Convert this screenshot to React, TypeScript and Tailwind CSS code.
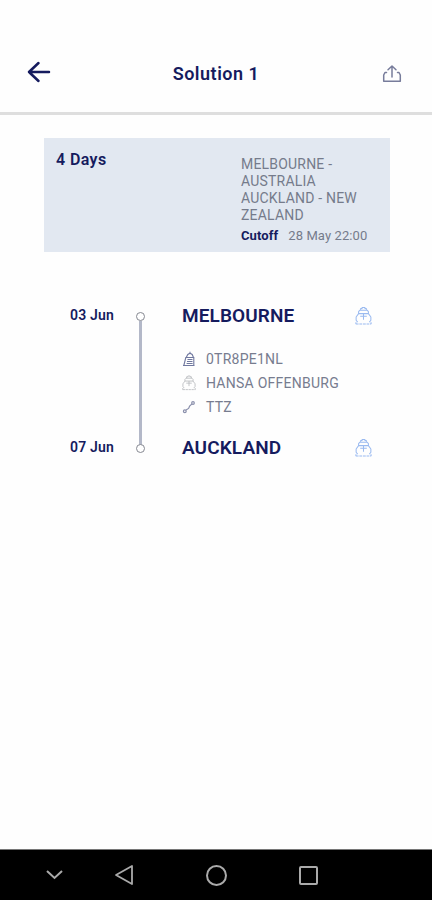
import React from 'react';

const ShipIcon: React.FC<{ className?: string }> = ({ className }) => (
  <svg viewBox="0 0 18 20" className={className} fill="none" stroke="currentColor" strokeWidth="1.1" strokeLinejoin="round">
    <path d="M6 3.8V2h1.5V1h3v1H12v1.8M3.8 7.5V5.3l1.4-1.5h7.6l1.4 1.5v2.2" />
    <path d="M2.8 16.5 1.2 14.5V11l2.6-3.5h10.4l2.6 3.5v3.5l-1.6 2M9 7.5V14M5.5 10.2h7" />
    <path d="M1 16.5v2M17 16.5v2" />
    <path d="M.8 18.5h16.4" strokeDasharray="3 .8" />
  </svg>
);

const ContainerIcon: React.FC = () => (
  <svg viewBox="0 0 14 16" className="h-4 w-3.5" fill="none" stroke="#70789f" strokeWidth="1.1">
    <path d="M4.2 6.5 5.8 3.5 8 2.2l2.2 1.3 1.3 3M8 .8v1.6" />
    <path d="M3.8 6.5h8v8H1.8l2-8ZM5.5 8.5h5M5 10.5h5.5M4.6 12.5h6M1 14.5h11.5" />
  </svg>
);

const VoyageIcon: React.FC = () => (
  <svg viewBox="0 0 14 14" className="size-3.5" fill="none" stroke="#8a8fab" strokeWidth="1.2">
    <circle cx="2.8" cy="11.2" r="1.4" />
    <circle cx="11" cy="3" r="1.3" />
    <path d="m4 10 2.6-1.6 1-2.2L10 3.8" />
  </svg>
);

const stops = [
  { date: '03 Jun', port: 'MELBOURNE' },
  { date: '07 Jun', port: 'AUCKLAND' },
];

const details = [
  { text: '0TR8PE1NL', icon: <ContainerIcon /> },
  { text: 'HANSA OFFENBURG', icon: <ShipIcon className="h-4 w-3.5 text-[#b9bbbf]" /> },
  { text: 'TTZ', icon: <VoyageIcon /> },
];

const StopRow: React.FC<{ date: string; port: string }> = ({ date, port }) => (
  <div className="flex h-6 items-center">
    <span className="w-[66px] pb-0.5 text-[14px] font-semibold tracking-[0.2px]">{date}</span>
    <span className="mt-px size-[9px] rounded-full border-[1.5px] border-[#858891] bg-white" />
    <span className="ml-[37px] w-[173px] text-[19px] font-semibold tracking-[0.1px]">{port}</span>
    <ShipIcon className="h-5 w-[17px] text-[#9abaf0]" />
  </div>
);

const App: React.FC = () => {
  return (
    <div className="flex h-screen w-full flex-col bg-[#fefefe] font-['Roboto',sans-serif] text-[#151b5e]">
      {/* Header */}
      <header className="grid h-[115px] shrink-0 grid-cols-3 items-center border-b-[3px] border-[#dedede] px-[27px] pt-[35px]">
        <svg viewBox="0 0 24 22" className="-mt-[3px] h-[22px] w-6" fill="none" stroke="currentColor" strokeWidth="2.5" strokeLinecap="round" strokeLinejoin="round">
          <path d="M22 11H2M11.5 2 2 11l9.5 9" />
        </svg>
        <h1 className="text-center text-[18px] font-semibold tracking-[0.5px] whitespace-nowrap">Solution 1</h1>
        <svg viewBox="0 0 20 20" className="mr-[3px] size-5 justify-self-end" fill="none" stroke="#777c9b" strokeWidth="1.5" strokeLinecap="round" strokeLinejoin="round">
          <path d="M10 13V2M6 5.8 10 2l4 3.8" />
          <path d="M4.5 8.5H3L1.7 11v6.3h16.6V11L17 8.5h-1.5" />
        </svg>
      </header>

      <main className="flex-1">
        {/* Summary */}
        <section className="mt-[23px] ml-11 flex h-[114px] w-[346px] bg-[#e2e8f1]">
          <h2 className="w-[197px] pt-[10px] pl-3 text-[16px] font-semibold tracking-[0.4px]">4 Days</h2>
          <div className="pt-[18px] text-[14px] leading-[17px] tracking-[0.2px] text-[#757b8b]">
            <p>MELBOURNE -</p>
            <p>AUSTRALIA</p>
            <p>AUCKLAND - NEW</p>
            <p>ZEALAND</p>
            <p className="mt-[3px] flex gap-2.5 text-[13px] tracking-[0.1px]">
              <span className="font-bold text-[#151b5e]">Cutoff</span>
              <span>28 May 22:00</span>
            </p>
          </div>
        </section>

        {/* Route */}
        <section className="mt-[52px] ml-[70px]">
          <StopRow {...stops[0]} />
          <div className="flex h-[108px]">
            <div className="ml-[69px] -mt-[7px] h-[124px] w-[3px] bg-[#b3b8c8]" />
            <ul className="ml-10 pt-[19px]">
              {details.map((item) => (
                <li key={item.text} className="flex h-6 items-center text-[14px] tracking-[0.25px] text-[#777c8f]">
                  <span className="w-6">{item.icon}</span>
                  {item.text}
                </li>
              ))}
            </ul>
          </div>
          <StopRow {...stops[1]} />
        </section>
      </main>

      {/* Android navigation bar */}
      <nav className="flex h-[51px] shrink-0 items-center border-t border-[#777] bg-black pl-[46px] text-[#aaa]">
        <svg viewBox="0 0 17 20" className="h-5 w-[17px]" fill="none" stroke="currentColor" strokeWidth="2">
          <path d="m1 6 7.5 7L16 6" />
        </svg>
        <svg viewBox="0 0 20 22" className="ml-[51px] h-[22px] w-5" fill="none" stroke="currentColor" strokeWidth="1.8" strokeLinejoin="round">
          <path d="M18 2v18L2 11Z" />
        </svg>
        <span className="ml-[72px] size-[21px] rounded-full border-2 border-current" />
        <span className="ml-[72px] size-[19px] rounded-[2px] border-2 border-current" />
      </nav>
    </div>
  );
};

export default App;
